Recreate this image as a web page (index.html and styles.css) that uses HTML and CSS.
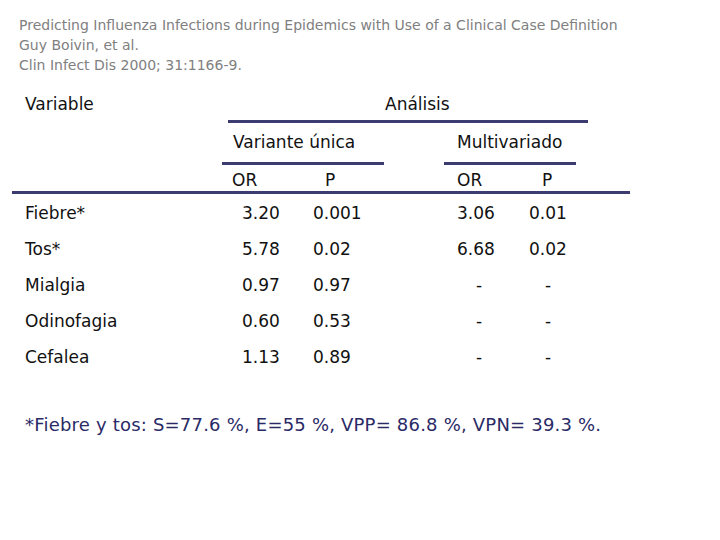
FILE: index.html
```html
<!DOCTYPE html>
<html>
<head>
<meta charset="utf-8">
<link rel="stylesheet" href="styles.css">
</head>
<body>
<header class="cite">
  <p>Predicting Influenza Infections during Epidemics with Use of a Clinical Case Definition</p>
  <p>Guy Boivin, et al.</p>
  <p>Clin Infect Dis 2000; 31:1166-9.</p>
</header>
<div class="table">
  <div class="h1 var">Variable</div>
  <div class="h1 analisis">Análisis</div>

  <div class="h2 uni">Variante única</div>
  <div class="h2 multi">Multivariado</div>

  <div class="h3 c1"></div>
  <div class="h3 c2">OR</div>
  <div class="h3 c3">P</div>
  <div class="h3 c4">OR</div>
  <div class="h3 c5">P</div>

  <div class="d name first">Fiebre*</div><div class="d or first">3.20</div><div class="d p first">0.001</div><div class="d or2 first">3.06</div><div class="d p2 first">0.01</div>
  <div class="d name">Tos*</div><div class="d or">5.78</div><div class="d p">0.02</div><div class="d or2">6.68</div><div class="d p2">0.02</div>
  <div class="d name">Mialgia</div><div class="d or">0.97</div><div class="d p">0.97</div><div class="d or2 dash">-</div><div class="d p2 dash">-</div>
  <div class="d name">Odinofagia</div><div class="d or">0.60</div><div class="d p">0.53</div><div class="d or2 dash">-</div><div class="d p2 dash">-</div>
  <div class="d name">Cefalea</div><div class="d or">1.13</div><div class="d p">0.89</div><div class="d or2 dash">-</div><div class="d p2 dash">-</div>
</div>
<p class="note">*Fiebre y tos: S=77.6 %, E=55 %, VPP= 86.8 %, VPN= 39.3 %.</p>
</body>
</html>
```

FILE: styles.css
```css
html, body {
  margin: 0;
  padding: 0;
  background: #ffffff;
}

body {
  width: 720px;
  height: 540px;
  overflow: hidden;
  font-family: "DejaVu Sans", Verdana, sans-serif;
}

.cite {
  padding: 15px 0 0 19px;
  font-family: "DejaVu Sans", sans-serif;
  font-size: 14px;
  line-height: 20px;
  color: #808080;
}

.cite p {
  margin: 0;
}

.table {
  margin: 18px 0 0 12px;
  width: 618px;
  display: grid;
  grid-template-columns: 220px 81px 144px 72px 101px;
  font-size: 17px;
  color: #111111;
  line-height: 22px;
}

.h1 {
  padding-top: 0;
}

.var {
  grid-column: 1;
  padding-left: 13px;
}

.analisis {
  grid-column: 2 / 6;
  margin-left: -4px;
  margin-right: 42px;
  padding-left: 157px;
  padding-bottom: 5px;
  border-bottom: 3px solid #3c3c70;
}

.h2 {
  padding-top: 8px;
  padding-bottom: 9px;
  border-bottom: 3px solid #3c3c70;
}

.uni {
  grid-column: 2 / 4;
  margin-left: -10px;
  margin-right: 73px;
  padding-left: 11px;
}

.multi {
  grid-column: 4 / 6;
  margin-left: -13px;
  margin-right: 54px;
  padding-left: 13px;
}

.h3 {
  padding-top: 4px;
  padding-bottom: 0;
  border-bottom: 3px solid #3c3c70;
}

.c3 {
  padding-left: 12px;
}

.c5 {
  padding-left: 13px;
}

.d {
  line-height: 36px;
}

.d.first {
  padding-top: 1px;
}

.name {
  padding-left: 13px;
}

.or {
  padding-left: 10px;
}

.dash.or2 {
  padding-left: 19px;
}

.dash.p2 {
  padding-left: 16px;
}

.note {
  margin: 38px 0 0 25px;
  font-size: 18px;
  letter-spacing: 0.2px;
  line-height: 24px;
  color: #2a2a66;
}
```
